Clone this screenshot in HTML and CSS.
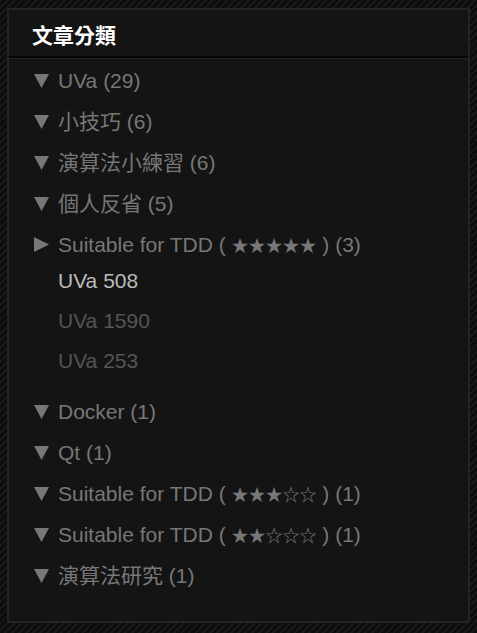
FILE: index.html
```html
<!DOCTYPE html>
<html>
<head>
<meta charset="utf-8">
<link rel="stylesheet" href="styles.css">
</head>
<body>
<div class="panel">
  <div class="head">文章分類</div>
  <ul class="cats">
    <li class="cat"><svg class="arrow" width="15" height="14" viewBox="0 0 15 14"><polygon points="0,0 15,0 7.5,14"/></svg><span>UVa (29)</span></li>
    <li class="cat"><svg class="arrow" width="15" height="14" viewBox="0 0 15 14"><polygon points="0,0 15,0 7.5,14"/></svg><span>小技巧 (6)</span></li>
    <li class="cat"><svg class="arrow" width="15" height="14" viewBox="0 0 15 14"><polygon points="0,0 15,0 7.5,14"/></svg><span>演算法小練習 (6)</span></li>
    <li class="cat"><svg class="arrow" width="15" height="14" viewBox="0 0 15 14"><polygon points="0,0 15,0 7.5,14"/></svg><span>個人反省 (5)</span></li>
    <li class="cat open"><svg class="arrow" width="15" height="15" viewBox="0 0 15 15"><polygon points="0,0 15,7.5 0,15"/></svg><span>Suitable for TDD ( <span class="stars">★★★★★</span> ) (3)</span></li>
    <li class="sub">
      <ul class="posts">
        <li class="post active">UVa 508</li>
        <li class="post">UVa 1590</li>
        <li class="post">UVa 253</li>
      </ul>
    </li>
    <li class="cat"><svg class="arrow" width="15" height="14" viewBox="0 0 15 14"><polygon points="0,0 15,0 7.5,14"/></svg><span>Docker (1)</span></li>
    <li class="cat"><svg class="arrow" width="15" height="14" viewBox="0 0 15 14"><polygon points="0,0 15,0 7.5,14"/></svg><span>Qt (1)</span></li>
    <li class="cat"><svg class="arrow" width="15" height="14" viewBox="0 0 15 14"><polygon points="0,0 15,0 7.5,14"/></svg><span>Suitable for TDD ( <span class="stars">★★★☆☆</span> ) (1)</span></li>
    <li class="cat"><svg class="arrow" width="15" height="14" viewBox="0 0 15 14"><polygon points="0,0 15,0 7.5,14"/></svg><span>Suitable for TDD ( <span class="stars">★★☆☆☆</span> ) (1)</span></li>
    <li class="cat"><svg class="arrow" width="15" height="14" viewBox="0 0 15 14"><polygon points="0,0 15,0 7.5,14"/></svg><span>演算法研究 (1)</span></li>
  </ul>
</div>
</body>
</html>
```
FILE: styles.css
```css
html, body {
  margin: 0;
  padding: 0;
}
body {
  width: 477px;
  height: 633px;
  background: repeating-linear-gradient(-45deg, #0d0d0d 0px, #0d0d0d 3px, #1a1a1a 3px, #1a1a1a 5px);
  font-family: "Liberation Sans", Arial, "Noto Sans CJK TC", sans-serif;
  padding: 8px 0 0 7px;
  box-sizing: border-box;
}
.panel {
  width: 463px;
  height: 615px;
  box-sizing: border-box;
  border: 2px solid #232323;
  background: #141414;
}
.head {
  height: 48px;
  box-sizing: border-box;
  padding: 11px 0 0 23px;
  color: #fff;
  font-size: 21px;
  font-weight: bold;
  font-family: "Noto Sans CJK TC", sans-serif;
  line-height: 27px;
  border-bottom: 2px solid #050505;
  box-shadow: 0 1px 0 #262626;
}
.cats {
  list-style: none;
  margin: 0;
  padding: 2px 0 0 25px;
}
.cat {
  display: flex;
  align-items: center;
  height: 41px;
  color: #777;
  font-size: 21px;
  line-height: 24px;
  white-space: nowrap;
}
.stars {
  font-size: 17px;
  font-family: "Noto Sans CJK TC", sans-serif;
}
.arrow {
  flex: none;
  fill: #777;
  margin-right: 9px;
}
.sub {
  padding: 0 0 10px 24px;
}
.posts {
  list-style: none;
  margin: 0;
  padding: 0;
}
.post {
  height: 40px;
  line-height: 40px;
  font-size: 21px;
  color: #555;
}
.post:first-child {
  height: 36px;
  line-height: 32px;
}
.post.active {
  color: #bbb;
}
```
